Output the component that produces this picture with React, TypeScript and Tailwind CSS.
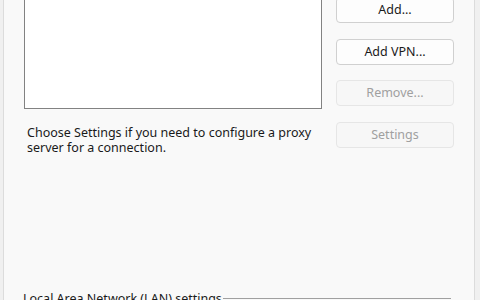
export default function App() {
  const font = { fontFamily: '"Segoe UI", "Noto Sans", Arial, sans-serif' };
  return (
    <div className="w-[480px] h-[300px] overflow-hidden bg-[#f0f0f0] pl-[3px] pr-[5px] text-[12.5px] text-[#1a1a1a]" style={font}>
      <div className="h-full border-x border-[#dcdcdc] bg-[#f9f9f9] flex flex-col">
        <div className="flex pl-[20px]">
          <div className="w-[298px] flex flex-col">
            <div className="-mt-[30px] h-[139px] bg-white border border-[#828282]" />
            <p className="mt-[16px] pl-[3px] leading-[15px] whitespace-nowrap">
              Choose Settings if you need to configure a proxy
              <br />
              server for a connection.
            </p>
          </div>
          <div className="ml-[14px] w-[118px] flex flex-col">
            <button className="-mt-[3px] h-[26px] rounded-[4px] border border-[#d0d0d0] bg-[#fdfdfd] leading-[24px]">Add...</button>
            <button className="mt-[16px] h-[26px] rounded-[4px] border border-[#d0d0d0] bg-[#fdfdfd] leading-[24px]">Add VPN...</button>
            <button className="mt-[15px] h-[26px] rounded-[4px] border border-[#e6e6e6] bg-[#f7f7f7] text-[#a0a0a0] leading-[24px]">Remove...</button>
            <button className="mt-[16px] h-[26px] rounded-[4px] border border-[#e6e6e6] bg-[#f7f7f7] text-[#a0a0a0] leading-[24px]">Settings</button>
          </div>
        </div>
        <div className="mt-auto -mb-[8px] flex items-center pl-[19px] pr-[23px] h-[20px]">
          <span className="leading-[15px] whitespace-nowrap">Local Area Network (LAN) settings</span>
          <div className="flex-1 h-px bg-[#a0a0a0] ml-[1px]" />
        </div>
      </div>
    </div>
  );
}
